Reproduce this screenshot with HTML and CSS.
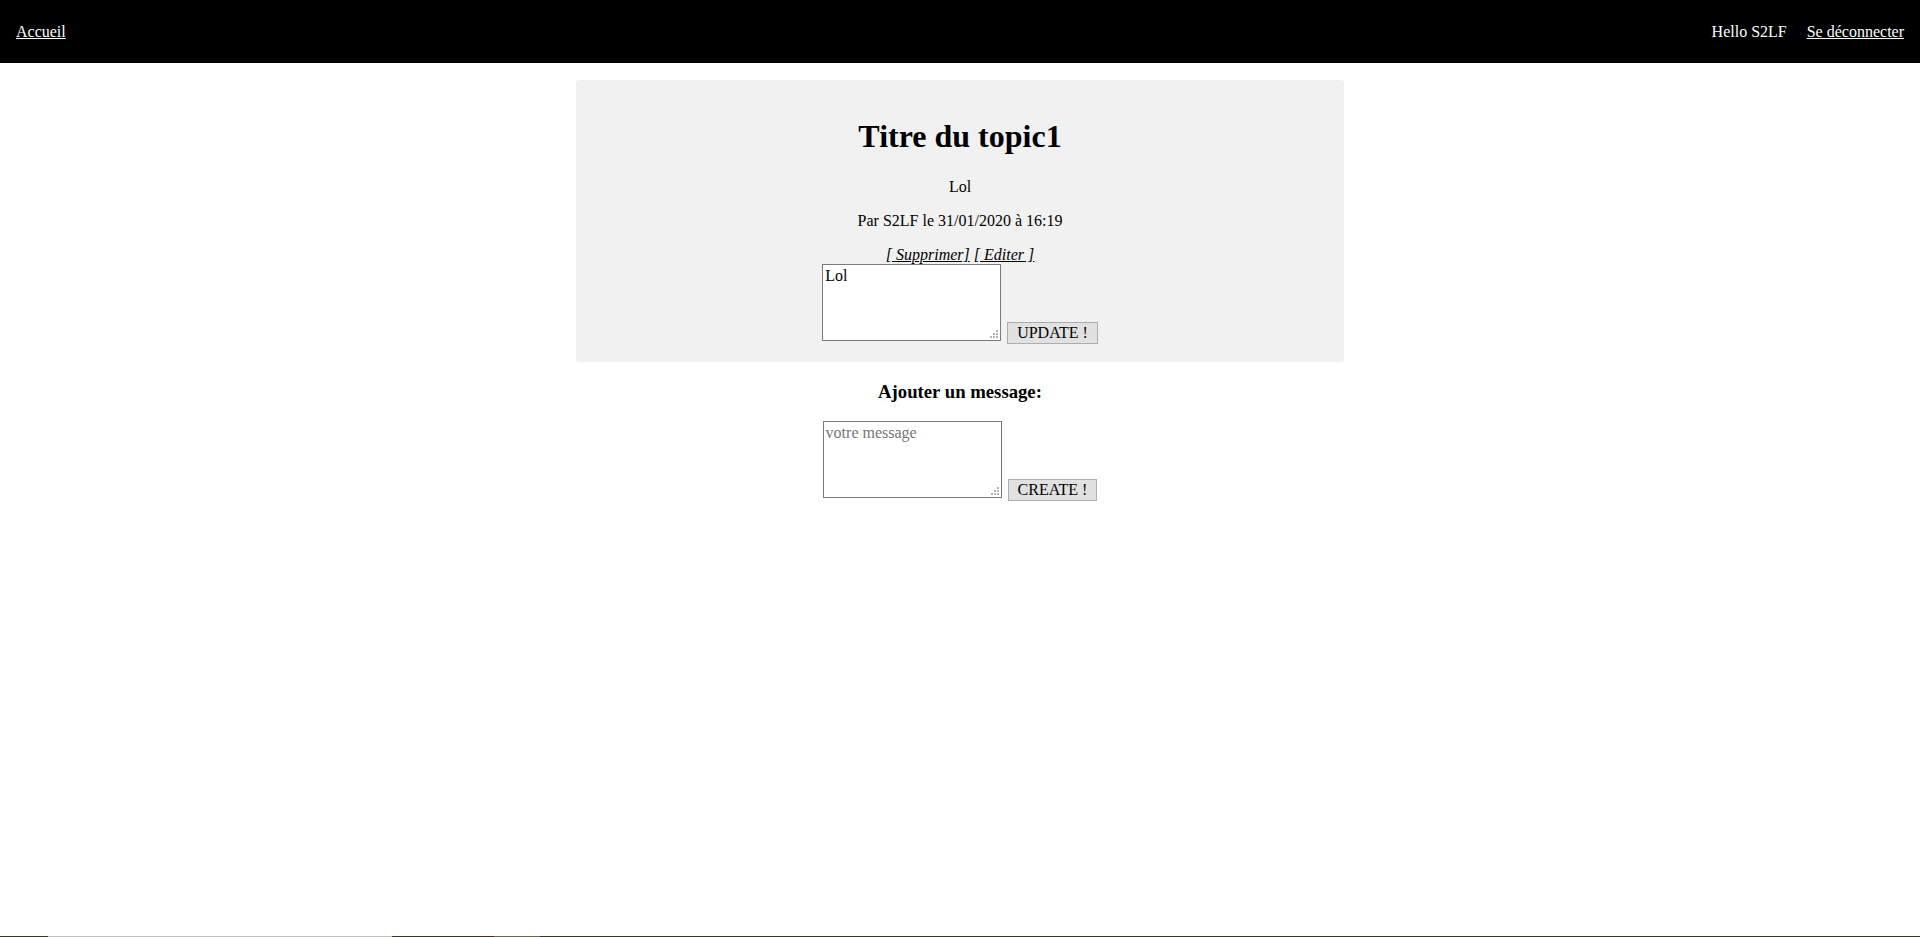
FILE: index.html
```html
<!DOCTYPE html>
<html lang="fr">
<head>
<meta charset="utf-8">
<title>Titre du topic1</title>
<link rel="stylesheet" href="styles.css">
</head>
<body>
<nav class="topbar">
  <a class="nav-link" href="#">Accueil</a>
  <div class="nav-right">
    <span class="hello">Hello S2LF</span>
    <a class="nav-link" href="#">Se déconnecter</a>
  </div>
</nav>
<main class="page">
  <section class="topic">
    <h1 class="topic-title">Titre du topic1</h1>
    <p class="topic-body">Lol</p>
    <p class="topic-meta">Par S2LF le 31/01/2020 à 16:19</p>
    <i class="topic-actions"><a href="#">[ Supprimer]</a> <a href="#">[ Editer ]</a></i>
    <form class="edit-form">
      <span class="area-wrap"><textarea class="msg-area">Lol</textarea><svg class="grip" width="8" height="8" viewBox="0 0 8 8"><rect x="6" y="0" width="2" height="2"/><rect x="3" y="3" width="2" height="2"/><rect x="6" y="3" width="2" height="2"/><rect x="0" y="6" width="2" height="2"/><rect x="3" y="6" width="2" height="2"/><rect x="6" y="6" width="2" height="2"/></svg></span>
      <button class="btn" type="button">UPDATE !</button>
    </form>
  </section>
  <h3 class="add-title">Ajouter un message:</h3>
  <form class="add-form">
    <span class="area-wrap"><textarea class="msg-area" placeholder="votre message"></textarea><svg class="grip" width="8" height="8" viewBox="0 0 8 8"><rect x="6" y="0" width="2" height="2"/><rect x="3" y="3" width="2" height="2"/><rect x="6" y="3" width="2" height="2"/><rect x="0" y="6" width="2" height="2"/><rect x="3" y="6" width="2" height="2"/><rect x="6" y="6" width="2" height="2"/></svg></span>
    <button class="btn" type="button">CREATE !</button>
  </form>
</main>
<div class="taskbar-edge"></div>
</body>
</html>
```

FILE: styles.css
```css
html, body {
  margin: 0;
  padding: 0;
  background: #ffffff;
}

body {
  font-family: "Liberation Serif", "Times New Roman", serif;
  font-size: 16px;
  color: #000000;
}

.topbar {
  height: 63px;
  background: #000000;
  display: flex;
  align-items: center;
  justify-content: space-between;
  padding: 0 16px;
  color: #ffffff;
}

.nav-right {
  display: flex;
  align-items: center;
  gap: 20px;
}

.nav-link {
  color: #ffffff;
  text-decoration: underline;
}

.page {
  text-align: center;
  padding-top: 17px;
}

.topic {
  width: 768px;
  margin: 0 auto;
  background: #f1f1f1;
  border-radius: 3px;
  padding: 17px 0 18px;
}

.topic-title {
  font-size: 32px;
  font-weight: bold;
  margin: 21.44px 0 22.5px;
}

.topic-body,
.topic-meta {
  margin: 16px 0;
}

.topic-actions a {
  color: #000000;
  text-decoration: underline;
}

.edit-form,
.add-form {
  margin: 0;
}

.area-wrap {
  position: relative;
  display: inline-block;
  font-size: 0;
  line-height: 0;
  vertical-align: -3px;
}

.msg-area {
  box-sizing: border-box;
  width: 179px;
  height: 77px;
  margin: 0;
  padding: 2px;
  border: 1px solid #7a7a7a;
  background: #ffffff;
  font-family: "Liberation Serif", "Times New Roman", serif;
  font-size: 16px;
  line-height: normal;
  color: #000000;
  resize: none;
  vertical-align: baseline;
  outline: none;
}

.msg-area::placeholder {
  color: #757575;
}

.grip {
  position: absolute;
  right: 3px;
  bottom: 3px;
  fill: #b4b4b4;
}

.btn {
  font-family: "Liberation Serif", "Times New Roman", serif;
  font-size: 16px;
  color: #000000;
  background: #e1e1e1;
  border: 1px solid #adadad;
  border-radius: 0;
  padding: 1px 9px;
  margin: 0 0 0 2px;
  line-height: 18px;
}

.add-title {
  font-size: 18.72px;
  font-weight: bold;
  margin: 18.72px 0;
}

.taskbar-edge {
  position: fixed;
  left: 0;
  right: 0;
  bottom: 0;
  height: 1px;
  background: linear-gradient(to right, #3b3527 0, #3b3527 48px, #c0c0c0 48px, #c0c0c0 392px, #3b3527 392px, #3b3527 494px, #6b6552 494px, #6b6552 540px, #3b3527 540px, #3b3527 100%);
}
```
